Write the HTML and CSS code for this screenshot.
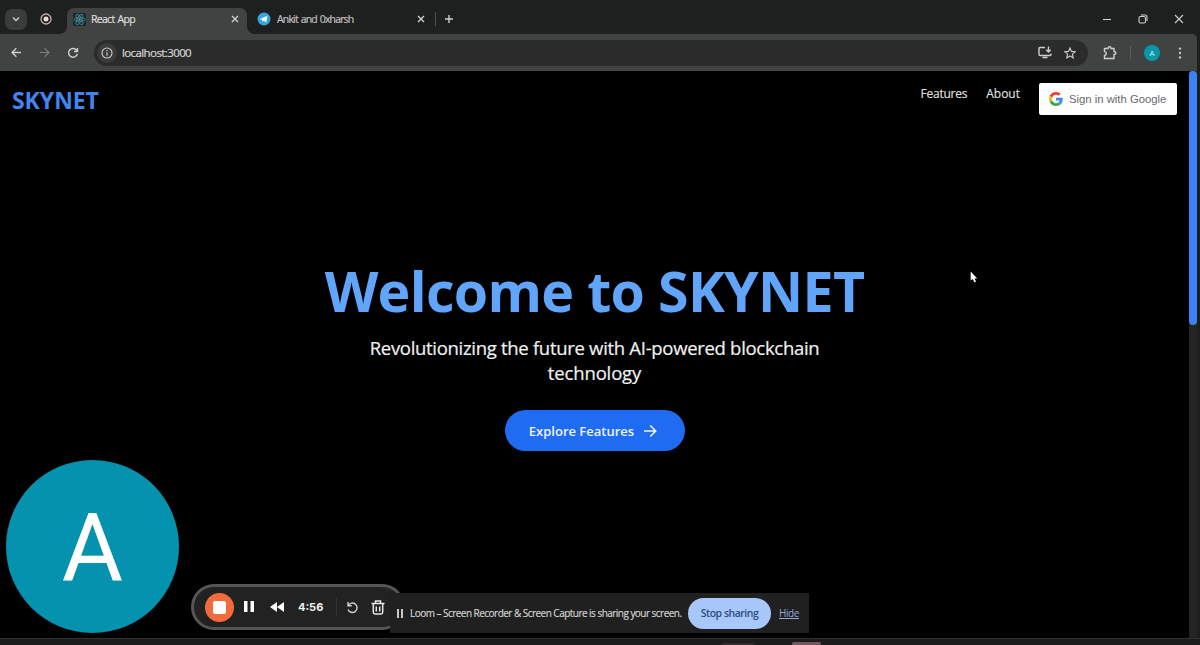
FILE: index.html
```html
<!DOCTYPE html>
<html lang="en">
<head>
<meta charset="utf-8">
<title>React App</title>
<link rel="stylesheet" href="styles.css">
</head>
<body>
<div class="window">
  <header class="tabstrip">
    <span class="tab-search"><svg width="8" height="6" viewBox="0 0 8 6" class="line bold"><path d="M1 1.5 4 4.5 7 1.5"/></svg></span>
    <svg class="record" width="12" height="12" viewBox="0 0 12 12"><circle cx="6" cy="6" r="5" fill="none" stroke="#c9aeb2" stroke-width="1.3"/><circle cx="6" cy="6" r="2.5" fill="#efdcdc"/></svg>
    <div class="tab active">
      <svg width="13" height="13" viewBox="0 0 13 13"><rect width="13" height="13" rx="1" fill="#1c292d"/><g fill="none" stroke="#43848f" stroke-width=".9"><ellipse cx="6.5" cy="6.5" rx="5.5" ry="2.2"/><ellipse cx="6.5" cy="6.5" rx="5.5" ry="2.2" transform="rotate(60 6.5 6.5)"/><ellipse cx="6.5" cy="6.5" rx="5.5" ry="2.2" transform="rotate(120 6.5 6.5)"/></g><circle cx="6.5" cy="6.5" r="1.2" fill="#4d9cab"/></svg>
      <span class="tab-title react">React App</span>
      <svg class="line bold close" width="8" height="8" viewBox="0 0 8 8"><path d="M1 1 7 7M7 1 1 7"/></svg>
    </div>
    <div class="tab second">
      <svg width="14" height="14" viewBox="0 0 14 14"><circle cx="7" cy="7" r="6.5" fill="#35a5dc"/><path d="M2.8 7 10.5 3.8 9.3 10.4 6.7 8.7 5.4 9.8 5.2 7.8Z" fill="#f2fbff"/></svg>
      <span class="tab-title ankit">Ankit and 0xharsh</span>
      <svg class="line bold close" width="8" height="8" viewBox="0 0 8 8"><path d="M1 1 7 7M7 1 1 7"/></svg>
    </div>
    <span class="divider tab-divider"></span>
    <svg class="line bold plus" width="10" height="10" viewBox="0 0 10 10"><path d="M5 1V9M1 5H9"/></svg>
    <div class="window-buttons">
      <svg class="line" width="10" height="10" viewBox="0 0 10 10"><path d="M1 5.5H9"/></svg>
      <svg class="line" width="10" height="10" viewBox="0 0 10 10"><rect x="1" y="2.5" width="6.5" height="6.5" rx="1.5"/><path d="M3 1H7Q9 1 9 3V7"/></svg>
      <svg class="line" width="10" height="10" viewBox="0 0 10 10"><path d="M1 1 9 9M9 1 1 9"/></svg>
    </div>
  </header>
  <div class="toolbar">
    <svg class="line bold back" width="11" height="11" viewBox="0 0 11 11"><path d="M10 5.5H1.5M5.3 1.3 1.1 5.5 5.3 9.7"/></svg>
    <svg class="line dim forward" width="11" height="11" viewBox="0 0 11 11"><path d="M1 5.5H9.5M5.7 1.3 9.9 5.5 5.7 9.7"/></svg>
    <svg class="line bold reload" width="12" height="12" viewBox="0 0 12 12"><path d="M9.8 3.6A4.4 4.4 0 1 0 10.3 7M10.5 1V4.5H7"/></svg>
    <div class="address">
      <span class="info"><svg class="line" width="12" height="12" viewBox="0 0 12 12"><circle cx="6" cy="6" r="5"/><path d="M6 5.3V8.8M6 3V4.3"/></svg></span>
      <span class="url">localhost:3000</span>
      <svg class="line bold install" width="14" height="13" viewBox="0 0 14 13"><path d="M7 1.5H2Q1 1.5 1 2.5V8.5Q1 9.5 2 9.5H12Q13 9.5 13 8.5V7.5M4.5 11.5H9.5M10.5 .5V6M8.2 3.8 10.5 6.1 12.8 3.8"/></svg>
      <svg class="line star" width="12" height="12" viewBox="0 0 12 12"><path d="M6 1 7.5 4.4 11.2 4.8 8.4 7.2 9.2 10.9 6 9 2.8 10.9 3.6 7.2 .8 4.8 4.5 4.4Z"/></svg>
    </div>
    <svg class="line bold puzzle" width="14" height="14" viewBox="0 0 14 14"><path d="M1.5 2.5H5Q5 .8 6.5 .8T8 2.5H11V5.5Q13 5.7 13 7T11 8.5V12.5H1.5V9.5Q3.3 9 3.3 7.5T1.5 5.5Z"/></svg>
    <span class="divider tool-divider"></span>
    <span class="profile">A</span>
    <svg class="menu" width="4" height="12" viewBox="0 0 4 12" fill="#c8c8c8"><circle cx="2" cy="1.6" r="1.2"/><circle cx="2" cy="6" r="1.2"/><circle cx="2" cy="10.4" r="1.2"/></svg>
  </div>
  <div class="viewport">
    <main class="page">
      <nav class="nav">
        <span class="brand">SKYNET</span>
        <a class="nav-link features">Features</a>
        <a class="nav-link about">About</a>
        <button class="google">
          <svg width="14" height="14" viewBox="0 0 48 48"><path fill="#EA4335" d="M24 9.5c3.54 0 6.71 1.22 9.21 3.6l6.85-6.85C35.9 2.38 30.47 0 24 0 14.62 0 6.51 5.38 2.56 13.22l7.98 6.19C12.43 13.72 17.74 9.5 24 9.5z"/><path fill="#4285F4" d="M46.98 24.55c0-1.57-.15-3.09-.38-4.55H24v9.02h12.94c-.58 2.96-2.26 5.48-4.78 7.18l7.73 6c4.51-4.18 7.09-10.36 7.09-17.65z"/><path fill="#FBBC05" d="M10.53 28.59a14.5 14.5 0 0 1 0-9.18l-7.98-6.19a24 24 0 0 0 0 21.56z"/><path fill="#34A853" d="M24 48c6.48 0 11.93-2.13 15.89-5.81l-7.73-6C30 37.64 27.24 38.5 24 38.5c-6.26 0-11.57-4.22-13.47-9.91l-7.98 6.19C6.51 42.62 14.62 48 24 48z"/></svg>
          <span>Sign in with Google</span>
        </button>
      </nav>
      <section class="hero">
        <h1>Welcome to SKYNET</h1>
        <p><span class="line-one">Revolutionizing the future with AI-powered blockchain</span><br><span class="line-two">technology</span></p>
        <button class="cta"><span>Explore Features</span><svg width="14" height="14" viewBox="0 0 14 14" fill="none" stroke="#eff6ff" stroke-width="1.6"><path d="M1 7H12.5M7.2 1.5 12.7 7 7.2 12.5"/></svg></button>
      </section>
    </main>
    <div class="scrollbar"><div class="thumb"></div></div>
  </div>
  <footer class="taskbar"><span class="task-dim"></span><span class="task-app"></span></footer>

  <div class="camera"><svg width="173" height="173" viewBox="0 0 173 173"><text x="86.5" y="120.5" text-anchor="middle" class="camera-letter">A</text></svg></div>
  <div class="recorder">
    <span class="stop"><i></i></span>
    <svg class="pause" width="10" height="12" viewBox="0 0 10 12" fill="#fff"><path d="M0 0H3.5V11H0ZM6.5 0H10V11H6.5Z"/></svg>
    <svg class="rewind" width="14" height="10" viewBox="0 0 14 10" fill="#fff"><path d="M7 0V10L0 5ZM14 0V10L7 5Z"/></svg>
    <span class="timer">4:56</span>
    <span class="rec-divider"></span>
    <svg class="line bold restart" width="13" height="13" viewBox="0 0 13 13"><path d="M2 1V4.8H5.8M2.2 4.6A4.7 4.7 0 1 1 2 8.5"/></svg>
    <svg class="trash" width="14" height="15" viewBox="0 0 14 15" fill="none" stroke="#e6e6e6" stroke-width="1.5"><path d="M.5 3.5H13.5M4.5 3V1H9.5V3M2.3 4V12.3Q2.3 14 4 14H10Q11.7 14 11.7 12.3V4M5.3 6.5V11.5M8.7 6.5V11.5"/></svg>
  </div>
  <div class="sharing">
    <svg width="6" height="9" viewBox="0 0 6 9" fill="#c9c9c9"><path d="M0 0H2V9H0ZM4 0H6V9H4Z"/></svg>
    <span class="share-text">Loom – Screen Recorder &amp; Screen Capture is sharing your screen.</span>
    <button class="stop-sharing">Stop sharing</button>
    <a class="hide">Hide</a>
  </div>
  <svg class="cursor" width="8" height="12" viewBox="0 0 8 12"><path d="M.7.5V9.6L2.8 8 4.4 11.4 6 10.6 4.5 7.4H7.2Z" fill="#fff"/></svg>
</div>
</body>
</html>
```

FILE: styles.css
```css
* { box-sizing: border-box; }
body { margin: 0; background: #000; font-family: "Open Sans", "Noto Sans", sans-serif; }
button { border: 0; padding: 0; font: inherit; }
svg { display: block; flex: none; }
span, a { white-space: nowrap; }
.window { position: relative; width: 1200px; height: 645px; overflow: hidden; display: flex; flex-direction: column; background: #1d1f1e; }
.line { fill: none; stroke: #cecece; stroke-width: 1.1; }
.line.bold { stroke-width: 1.4; }
.line.dim { stroke: #818181; }
.divider { width: 1px; background: #4c4e4d; }

.tabstrip { height: 34px; display: flex; align-items: center; padding: 4px 16px 0 5px; background: #1e201f; flex: none; }
.tab-search { width: 22px; height: 21px; border-radius: 7px; background: #3a3b3b; display: flex; align-items: center; justify-content: center; }
.record { margin-left: 13px; }
.tab { display: flex; align-items: center; }
.tab.active { position: relative; align-self: flex-end; width: 180px; height: 26px; margin-left: 15px; padding: 0 8px 4px 6px; border-radius: 7px 7px 0 0; background: #414242; }
.tab.active::before, .tab.active::after { content: ""; position: absolute; bottom: 0; width: 7px; height: 7px; }
.tab.active::before { left: -7px; background: radial-gradient(circle at 0 0, transparent 6.5px, #414242 7px); }
.tab.active::after { right: -7px; background: radial-gradient(circle at 100% 0, transparent 6.5px, #414242 7px); }
.tab-title { margin-left: 5px; font-size: 10.5px; line-height: 14px; color: #dedede; letter-spacing: -.5px; }
.react { letter-spacing: -.7px; word-spacing: 1px; -webkit-text-stroke: .2px #dedede; }
.second { width: 168px; margin-left: 10px; }
.ankit { color: #c0c0c0; letter-spacing: -.84px; word-spacing: 1px; margin-left: 6px; -webkit-text-stroke: .2px #c0c0c0; }
.close { margin-left: auto; }
.tab-divider { height: 14px; margin-left: 10px; }
.plus { margin-left: 8px; }
.window-buttons { display: flex; gap: 26px; margin-left: auto; }

.toolbar { width: 1197px; height: 37px; flex: none; display: flex; align-items: center; padding-left: 11px; background: #414242; border-radius: 0 5px 0 0; }
.forward { margin-left: 17px; }
.reload { margin-left: 17px; }
.address { width: 994px; height: 26px; margin-left: 15px; padding: 0 12px 0 4px; border-radius: 13px; background: #2b2b2b; display: flex; align-items: center; }
.info { width: 20px; height: 20px; border-radius: 50%; background: #3b3b3b; display: flex; align-items: center; justify-content: center; margin-left: -1px; }
.url { margin-left: 5px; font-size: 11.5px; color: #d5d5d5; letter-spacing: -.6px; -webkit-text-stroke: .2px #d5d5d5; }
.install { margin-left: auto; }
.star { margin-left: 12px; }
.puzzle { margin-left: 15px; }
.tool-divider { height: 13px; margin-left: 13px; background: #5c5d5d; }
.profile { width: 16px; height: 16px; margin-left: 13px; border-radius: 50%; background: #0797a8; color: #d9f4f7; font-size: 8px; line-height: 16px; text-align: center; }
.menu { margin-left: 18px; }

.viewport { flex: 1; display: flex; min-height: 0; }
.page { width: 1189px; background: #000; }
.scrollbar { width: 8px; background: #242424; }
.thumb { height: 254px; border-radius: 4px; background: #3b82f6; }
.nav { height: 60px; padding: 12px 12px 0; display: flex; align-items: flex-start; }
.brand { margin-right: auto; font-size: 23px; line-height: 34px; font-weight: 700; color: #4384ee; letter-spacing: -.05px; }
.nav-link { font-size: 12px; line-height: 22px; color: #dedede; -webkit-text-stroke: .2px #dedede; }
.features { letter-spacing: -.25px; }
.about { margin-left: 19px; }
.google { width: 138px; height: 32px; margin-left: 19px; padding-left: 10px; border-radius: 2px; background: #fff; display: flex; align-items: center; gap: 6px; color: #696969; font: 11.3px "Liberation Sans", Arial, sans-serif; }
.hero { display: flex; flex-direction: column; align-items: center; padding-top: 125px; }
h1 { margin: 0; font-size: 55.5px; line-height: 70px; font-weight: 700; color: #60a5fa; white-space: nowrap; letter-spacing: -.68px; }
.hero p { margin: 9px 0 0; text-align: center; font-size: 18.5px; line-height: 25px; color: #f1f1f1; letter-spacing: -.3px; -webkit-text-stroke: .2px #f1f1f1; }
.line-two { letter-spacing: -.15px; }
.cta { width: 180px; height: 41px; margin-top: 25px; border-radius: 21px; background: #1f6bf1; color: #eff6ff; display: flex; align-items: center; justify-content: center; gap: 9px; font-size: 13px; font-weight: 600; padding-right: 3px; }

.taskbar { height: 7px; flex: none; display: flex; align-items: flex-end; padding-left: 722px; background: #1c1c1d; border-top: 1px solid #303030; }
.task-dim { width: 32px; height: 2px; background: #352b2d; }
.task-app { width: 29px; height: 3px; margin-left: 38px; border-radius: 2px 2px 0 0; background: #72585d; }

.camera { position: absolute; left: 6px; top: 460px; width: 173px; height: 173px; border-radius: 50%; background: #0592ae; overflow: hidden; }
.camera-letter { font-family: Roboto, sans-serif; font-size: 94px; fill: #fff; }
.recorder { position: absolute; left: 191px; top: 584px; width: 214px; height: 46px; border: 3px solid #555; border-radius: 23px; background: #222; display: flex; align-items: center; padding-left: 11px; }
.stop { width: 29px; height: 29px; border-radius: 50%; background: #f16b3c; display: flex; align-items: center; justify-content: center; }
.stop i { width: 13px; height: 13px; border-radius: 2px; background: #fff; }
.pause { margin-left: 10px; }
.rewind { margin-left: 16px; }
.timer { width: 26px; margin-left: 14px; font: 700 11px Inter, sans-serif; color: #f0f0f0; }
.rec-divider { width: 1px; height: 18px; background: #343434; margin-left: 12px; }
.restart { margin-left: 9px; }
.trash { margin-left: 12px; }
.sharing { position: absolute; left: 390px; top: 593px; width: 419px; height: 40px; background: #202020; display: flex; align-items: center; padding-left: 7px; }
.share-text { margin-left: 7px; width: 271px; font-size: 10px; color: #d6d6d6; letter-spacing: -.53px; -webkit-text-stroke: .15px #d6d6d6; }
.stop-sharing { width: 83px; height: 31px; margin-left: 7px; border-radius: 16px; background: #a8c7fa; color: #2b4e7d; font-size: 10.5px; font-weight: 600; letter-spacing: -.5px; }
.hide { margin-left: 8px; color: #8fabd2; font-size: 10px; text-decoration: underline; letter-spacing: -.4px; }
.cursor { position: absolute; left: 970px; top: 271px; }
```
